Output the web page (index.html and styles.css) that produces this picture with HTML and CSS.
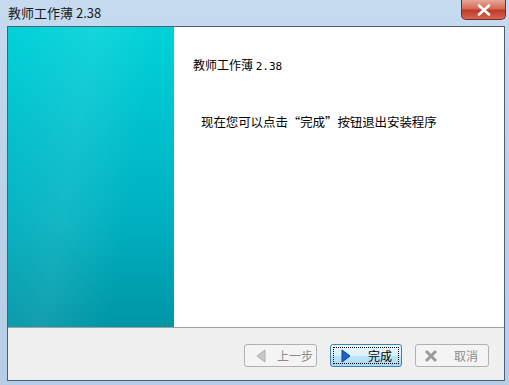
FILE: index.html
```html
<!DOCTYPE html>
<html>
<head>
<meta charset="utf-8">
<link rel="stylesheet" href="styles.css">
</head>
<body>
<div class="window">
  <div class="titlebar">
    <span class="title">教师工作薄 2.38</span>
    <div class="close"><svg width="14" height="12" viewBox="0 0 14 12"><path d="M2 1.5 L12 10.5 M12 1.5 L2 10.5" stroke="#fff" stroke-width="2.6" stroke-linecap="round"/></svg></div>
  </div>
  <div class="client">
    <div class="main">
      <div class="side"></div>
      <div class="content">
        <div class="heading">教师工作薄 <span class="mono">2.38</span></div>
        <div class="msg">现在您可以点击“完成”按钮退出安装程序</div>
      </div>
    </div>
    <div class="footer">
      <button class="btn disabled"><svg width="12" height="14" viewBox="0 0 12 14"><path d="M10 1 L10 13 L2 7 Z" fill="#c8c8c8" stroke="#b0b0b0"/></svg><span>上一步</span></button>
      <button class="btn default"><span class="focus"><svg width="12" height="14" viewBox="0 0 12 14"><path d="M2 1 L2 13 L10 7 Z" fill="#1e64c8" stroke="#0b3f8f"/></svg><span>完成</span></span></button>
      <button class="btn cancel"><svg width="14" height="14" viewBox="0 0 14 14"><path d="M2 2 L12 12 M12 2 L2 12" stroke="#9a9a9a" stroke-width="3"/></svg><span>取消</span></button>
    </div>
  </div>
</div>
</body>
</html>
```
FILE: styles.css
```css
html, body { margin: 0; padding: 0; }
body {
  width: 509px; height: 385px; overflow: hidden;
  font-family: "Noto Sans CJK SC", "Liberation Sans", sans-serif;
  background: #bcd4ea;
}
.window {
  width: 509px; height: 385px; box-sizing: border-box;
  background: linear-gradient(180deg, #c6dbf0 0%, #bcd3ea 40%, #b6cde6 100%);
  padding: 0 4px 4px 7px;
  display: flex; flex-direction: column;
}
.titlebar {
  height: 26px; display: flex; align-items: center; justify-content: space-between;
  position: relative;
}
.title { font-size: 13px; color: #1a1a1a; padding-left: 1px; margin-top: -2px; }
.close {
  position: absolute; right: -1px; top: 0; width: 45px; height: 20px;
  background: linear-gradient(180deg, #e8a89a 0%, #d26b55 45%, #c0392a 55%, #d5674f 100%);
  border: 1px solid #7a2a20; border-top: none; border-radius: 0 0 5px 5px;
  box-sizing: border-box; display: flex; align-items: center; justify-content: center;
}
.client {
  flex: 1; border: 1px solid #4e5e73; background: #f0f0f0;
  display: flex; flex-direction: column;
}
.main { height: 300px; display: flex; background: #fff; border-bottom: 1px solid #a0a0a0; }
.side {
  width: 166px;
  background:
    linear-gradient(100deg, rgba(255,255,255,0) 0%, rgba(255,255,255,0.08) 40%, rgba(255,255,255,0) 70%),
    linear-gradient(180deg, #00d2d8 0%, #00bfcc 35%, #00b0c0 65%, #0096a6 100%);
}
.content { flex: 1; padding: 30px 0 0 19px; }
.heading { font-size: 12px; color: #000; line-height: 16px; }
.mono { font-family: "DejaVu Sans Mono", monospace; font-size: 11px; }
.msg { font-size: 12.5px; color: #000; margin: 38px 0 0 8px; line-height: 18px; letter-spacing: -0.1px; }
.footer {
  flex: 1; display: flex; align-items: flex-start; justify-content: flex-end;
  padding: 16px 15px 0 0; gap: 13px;
}
.btn {
  width: 73px; height: 23px; box-sizing: border-box;
  border: 1px solid #a8a8a8; border-radius: 3px;
  background: linear-gradient(180deg, #f4f4f4 0%, #ececec 50%, #e0e0e0 51%, #d8d8d8 100%);
  font-family: "Noto Sans CJK SC", sans-serif; font-size: 12px;
  display: flex; align-items: center; gap: 10px; padding: 0 0 0 10px; color: #000;
}
.btn.disabled { background: #f4f4f4; border-color: #adb2b5; color: #8a8a8a; }
.btn.default {
  width: 72px; border-color: #3c7fb1; padding: 2px;
  background: linear-gradient(180deg, #eaf6fd 0%, #d9f0fc 50%, #bee6fd 51%, #a7d9f5 100%);
}
.focus {
  flex: 1; height: 100%; box-sizing: border-box; border: 1px dotted #000;
  display: flex; align-items: center; gap: 16px; padding-left: 6px;
}
.btn.cancel { width: 74px; color: #8a8a8a; background: #f4f4f4; border-color: #adb2b5; gap: 16px; padding-left: 8px; }
```
